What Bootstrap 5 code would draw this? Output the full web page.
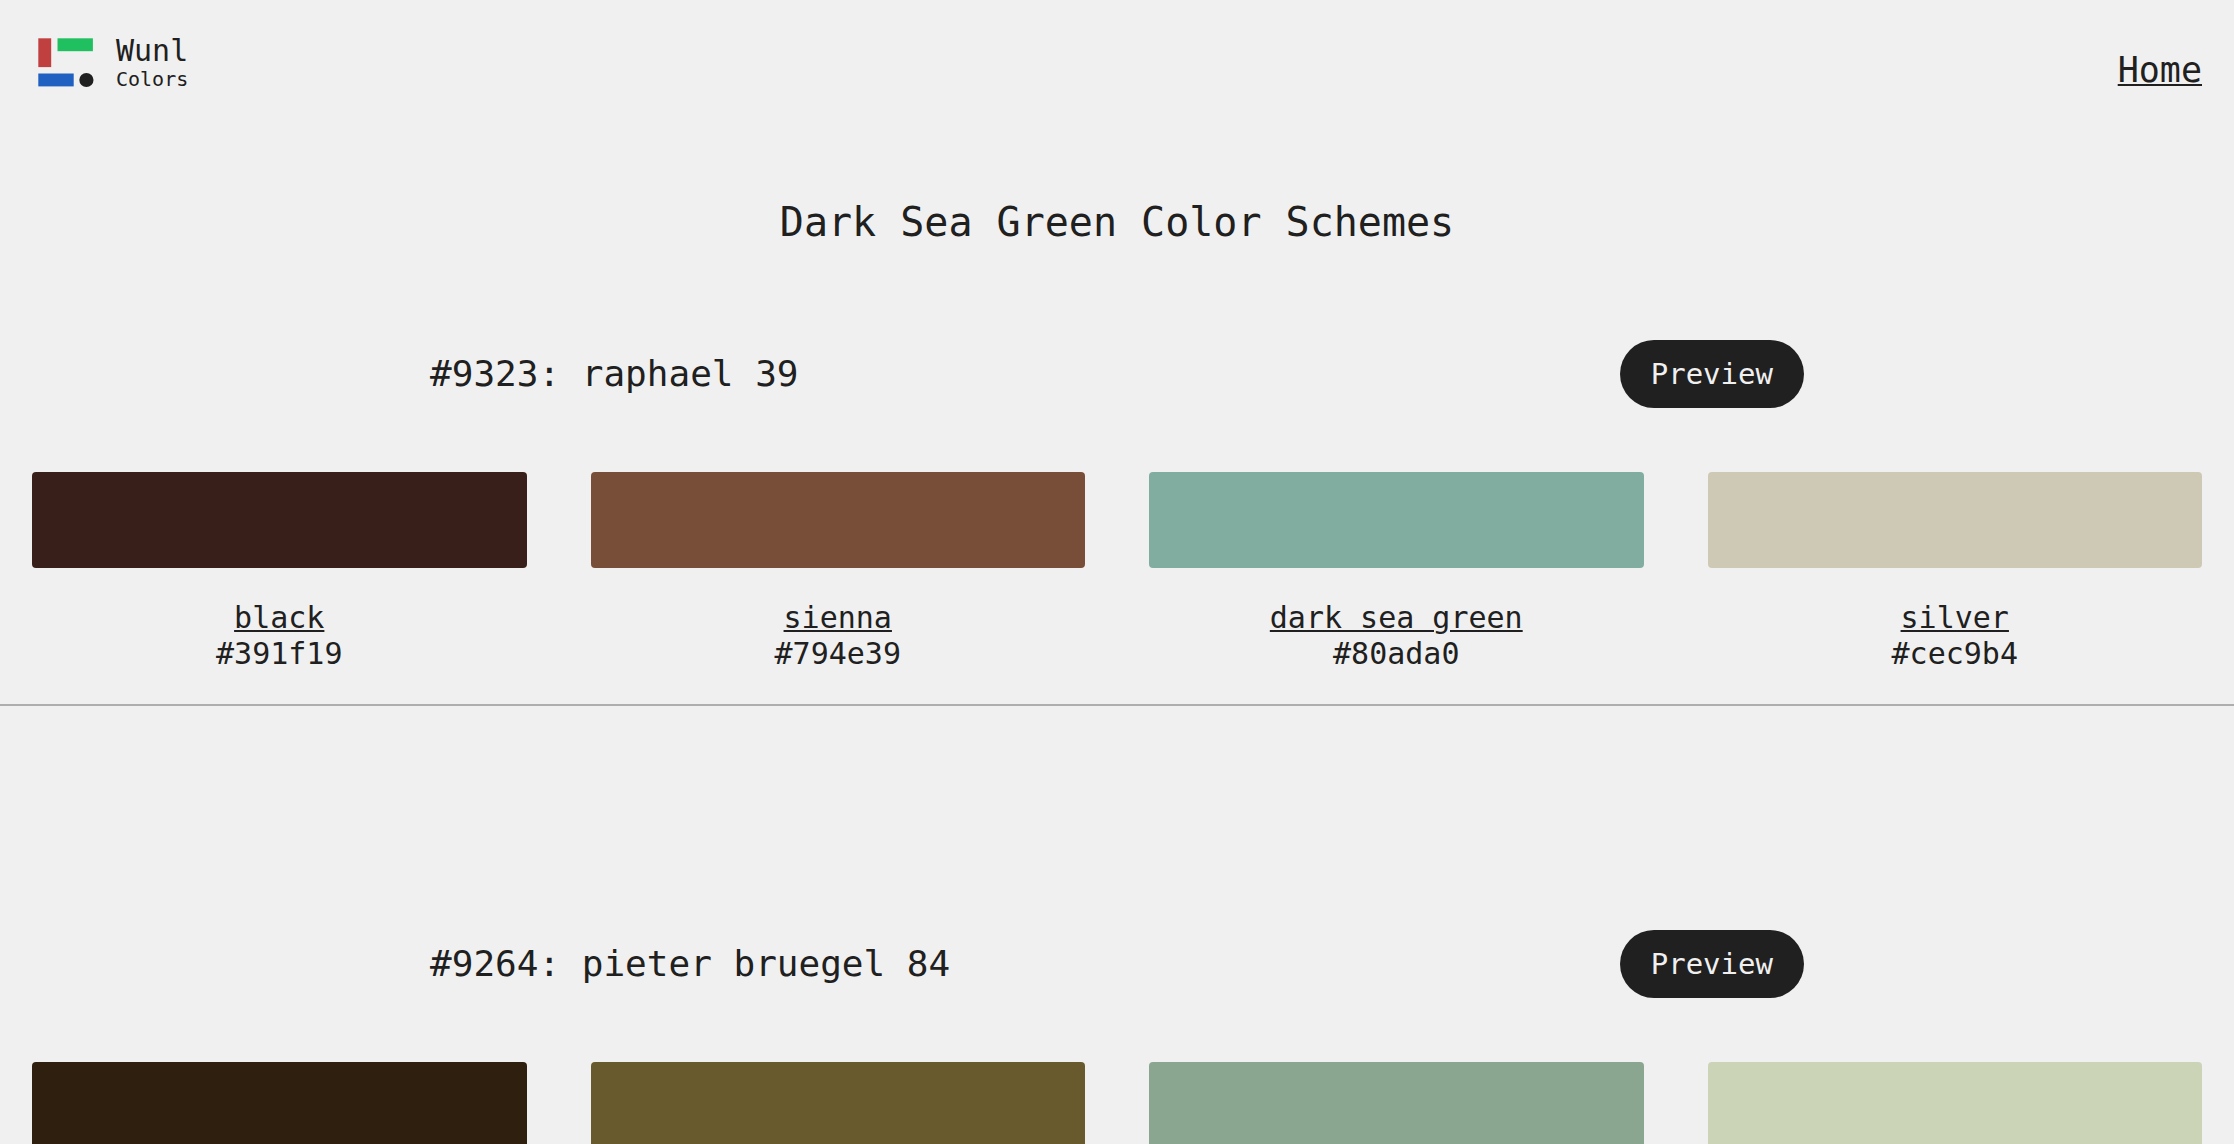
<!DOCTYPE html>
<html lang="en">
<head>
<meta charset="utf-8">
<meta name="viewport" content="width=device-width, initial-scale=1">
<title>Dark Sea Green Color Schemes - Wunl Colors</title>
<link href="https://cdn.jsdelivr.net/npm/bootstrap@5.3.0/dist/css/bootstrap.min.css" rel="stylesheet">
<style>
  body { background: #f0f0f0; color: #202020; font-family: "DejaVu Sans Mono", "Liberation Mono", monospace; font-size: 30px; line-height: 36px; }
  a, a:hover { color: #202020; text-decoration: underline; text-decoration-thickness: 2px; text-underline-offset: 2px; }
  .site-header { padding: 36px 32px; }
  .brand-link, .brand-link:hover { text-decoration: none; }
  .brand-name { font-size: 30px; line-height: 30px; }
  .brand-sub { font-size: 20px; line-height: 26px; }
  .home-link { font-size: 35px; line-height: 44px; }
  .page-title { font-size: 40px; line-height: 48px; margin: 70px 0 94px; }
  .scheme-head { width: 61.5%; margin-bottom: 64px; }
  .scheme-title { font-size: 36px; line-height: 44px; }
  .btn-preview { --bs-btn-color: #f0f0f0; --bs-btn-bg: #202020; --bs-btn-hover-color: #f0f0f0; --bs-btn-hover-bg: #3a3a3a; --bs-btn-border-width: 0; --bs-btn-padding-x: 31px; --bs-btn-padding-y: 16px; --bs-btn-font-size: 29px; --bs-btn-line-height: 36px; }
  .palette { --bs-gutter-x: 64px; }
  .swatch { height: 96px; border-radius: 4px; margin-bottom: 32px; }
  .scheme { padding-bottom: 32px; border-bottom: 2px solid #aeaeae; margin-bottom: 224px; }
  .c-black { background: #391f19; }
  .c-sienna { background: #794e39; }
  .c-sea { background: #80ada0; }
  .c-silver { background: #cec9b4; }
  .c-umber { background: #2e1f0f; }
  .c-olive { background: #695a2e; }
  .c-sage { background: #8aa690; }
  .c-pale { background: #cbd4b6; }
</style>
<script src="https://cdn.jsdelivr.net/npm/bootstrap@5.3.0/dist/js/bootstrap.bundle.min.js"></script>
</head>
<body class="vh-100 overflow-hidden">
<header class="site-header d-flex justify-content-between align-items-end">
  <a class="brand-link d-flex gap-3" href="#">
    <svg width="68" height="56" viewBox="0 0 68 56" aria-hidden="true">
      <rect x="6.3" y="2.3" width="12.9" height="28.8" fill="#c04040"/>
      <rect x="25.5" y="2.3" width="35.4" height="12.9" fill="#20c060"/>
      <rect x="6.3" y="37.5" width="35.4" height="12.9" fill="#2060c0"/>
      <circle cx="54.4" cy="44" r="7.1" fill="#202020"/>
    </svg>
    <span class="d-flex flex-column">
      <span class="brand-name">Wunl</span>
      <span class="brand-sub">Colors</span>
    </span>
  </a>
  <nav><a class="home-link d-block" href="#">Home</a></nav>
</header>

<main>
  <h1 class="page-title text-center fw-normal">Dark Sea Green Color Schemes</h1>

  <section class="scheme">
    <div class="scheme-head mx-auto d-flex justify-content-between align-items-center">
      <h2 class="scheme-title fw-normal mb-0">#9323: raphael 39</h2>
      <button type="button" class="btn btn-preview rounded-pill">Preview</button>
    </div>
    <div class="row palette mx-0 text-center">
      <div class="col-3"><div class="swatch c-black"></div><a href="#">black</a><div>#391f19</div></div>
      <div class="col-3"><div class="swatch c-sienna"></div><a href="#">sienna</a><div>#794e39</div></div>
      <div class="col-3"><div class="swatch c-sea"></div><a href="#">dark sea green</a><div>#80ada0</div></div>
      <div class="col-3"><div class="swatch c-silver"></div><a href="#">silver</a><div>#cec9b4</div></div>
    </div>
  </section>

  <section class="scheme">
    <div class="scheme-head mx-auto d-flex justify-content-between align-items-center">
      <h2 class="scheme-title fw-normal mb-0">#9264: pieter bruegel 84</h2>
      <button type="button" class="btn btn-preview rounded-pill">Preview</button>
    </div>
    <div class="row palette mx-0">
      <div class="col-3"><div class="swatch c-umber"></div></div>
      <div class="col-3"><div class="swatch c-olive"></div></div>
      <div class="col-3"><div class="swatch c-sage"></div></div>
      <div class="col-3"><div class="swatch c-pale"></div></div>
    </div>
  </section>
</main>
</body>
</html>
